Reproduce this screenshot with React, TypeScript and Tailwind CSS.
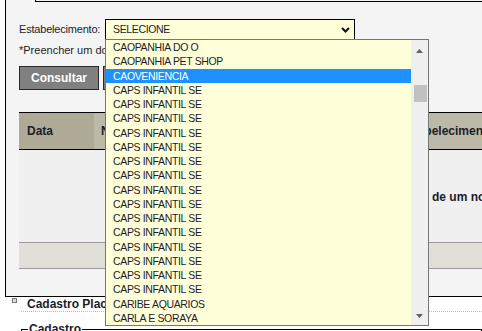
const items = [
  "CAOPANHIA DO O",
  "CAOPANHIA PET SHOP",
  "CAOVENIENCIA",
  ...Array.from({ length: 15 }, () => "CAPS INFANTIL SE"),
  "CARIBE AQUARIOS",
  "CARLA E SORAYA",
];

export default function App() {
  return (
    <div className="relative h-[331px] w-[482px] overflow-hidden bg-white text-[11px] text-[#1c1c2a] [font-family:'Liberation_Sans',Arial,sans-serif]">
      <div className="ml-[5px] h-[297px] border-b border-l border-black bg-[#f4f4f4]">
        <div className="ml-[29px] h-[2px] border-b border-l border-black" />
        <div className="pl-[13px]">
          <div className="mt-[17px] flex h-[21px] items-center">
            <span className="w-[86px] tracking-[-0.2px]">Estabelecimento:</span>
            <div className="relative flex h-[21px] w-[250px] items-center justify-between border border-black bg-[#ffffda] pl-[7px] pr-[4px]">
              <span className="text-[10.5px] tracking-[-0.35px]">SELECIONE</span>
              <svg width="9" height="6" viewBox="0 0 9 6">
                <path d="M1 1 L4.5 4.5 L8 1" fill="none" stroke="#111" strokeWidth="2" />
              </svg>
              <div className="absolute left-[-1px] top-[19px] z-10 flex h-[287px] w-[324px] border border-[#767676] bg-[#ffffda]">
                <ul className="flex-1">
                  {items.map((it, i) => (
                    <li
                      key={i}
                      className={
                        i === 2
                          ? "h-[14.25px] bg-[#1e90ff] pl-[7px] text-[10.5px] leading-[14.25px] tracking-[-0.35px] text-white"
                          : "h-[14.25px] pl-[7px] text-[10.5px] leading-[14.25px] tracking-[-0.35px]"
                      }
                    >
                      {it}
                    </li>
                  ))}
                </ul>
                <div className="flex w-[17px] flex-col items-center bg-[#f0f0f0]">
                  <svg width="7" height="4" viewBox="0 0 7 4" className="mt-[9px]">
                    <path d="M0 4 L3.5 0 L7 4 Z" fill="#606060" />
                  </svg>
                  <div className="ml-[1px] mt-[32px] h-[17px] w-[13px] bg-[#c1c1c1]" />
                  <div className="flex-1" />
                  <svg width="7" height="4" viewBox="0 0 7 4" className="mb-[7px]">
                    <path d="M0 0 L3.5 4 L7 0 Z" fill="#606060" />
                  </svg>
                </div>
              </div>
            </div>
          </div>
          <p className="mt-[4px] leading-[13px]">*Preencher um dos campos obrigatórios.</p>
          <div className="mt-[9px] flex gap-[4px]">
            <button className="h-[24px] w-[80px] border border-[#2a2a2a] bg-[#808080] text-[12px] font-bold text-white">
              Consultar
            </button>
            <button className="h-[24px] w-[80px] border border-[#2a2a2a] bg-[#808080] text-[12px] font-bold text-white">
              Novo
            </button>
          </div>
          <div className="mt-[22px] w-[700px] text-[12px]">
            <div className="flex h-[38px] border-y border-black font-bold">
              <div className="flex w-[75px] items-center bg-[#aeaa96] pl-[8px]">Data</div>
              <div className="flex w-[298px] items-center bg-[#bcb9a9] pl-[7px]">Nome</div>
              <div className="flex flex-1 items-center bg-[#bcb9a9] pl-[7px]">Estabelecimento</div>
            </div>
            <div className="h-[92px] bg-[#f0f0f0] pl-[413px] pt-[40px] font-bold leading-[14px] whitespace-nowrap">
              de um novo registro
            </div>
            <div className="h-[27px] border-y border-[#999] bg-[#e0e0d8]" />
          </div>
        </div>
      </div>
      <div className="flex">
        <div className="ml-[12px] mt-[1px] h-[5px] w-[5px] border border-[#777] bg-[#ddd]" />
        <div className="ml-[4px] flex-1 border-b border-dotted border-[#bbb] pl-[6px] text-[12px] font-bold leading-[14px]">
          Cadastro Placa
        </div>
      </div>
      <fieldset className="ml-[21px] mt-[10px] h-[40px] border border-black pl-[6px]">
        <legend className="px-[1px] text-[12px] font-bold leading-[14px]">Cadastro</legend>
      </fieldset>
    </div>
  );
}
